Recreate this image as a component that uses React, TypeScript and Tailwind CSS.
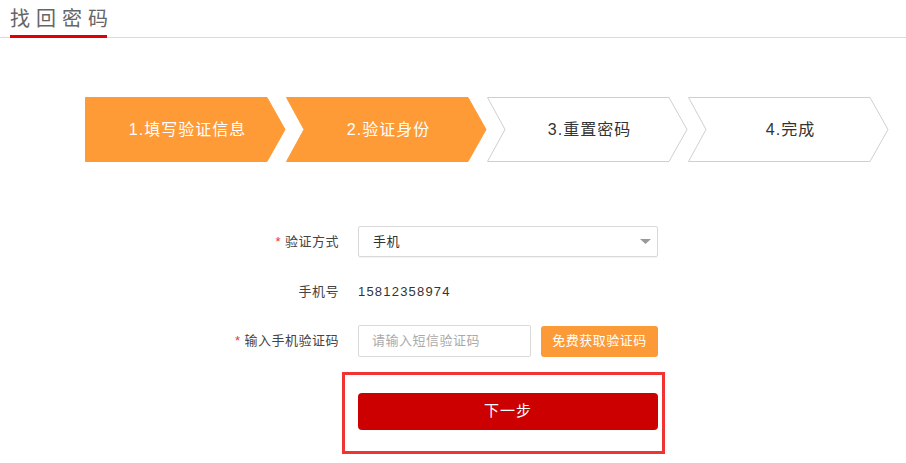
import React from "react";

const FONT = '"Helvetica Neue", "Liberation Sans", "Noto Sans CJK SC", sans-serif';

function Step({ label, active, first }: { label: string; active: boolean; first?: boolean }) {
  const pts = first
    ? "0.5,0.5 182,0.5 200,32.5 182,64.5 0.5,64.5"
    : "0.5,0.5 182,0.5 200,32.5 182,64.5 0.5,64.5 18,32.5";
  return (
    <div className="relative w-[201px] h-[65px] flex items-center justify-center">
      <svg className="absolute inset-0" width="201" height="65" viewBox="0 0 201 65">
        <polygon
          points={pts}
          fill={active ? "#fe9b37" : "#ffffff"}
          stroke={active ? "#fe9b37" : "#cfcfcf"}
          strokeWidth="1"
        />
      </svg>
      <span
        className={`relative text-[16px] tracking-[1px] pl-[4px] ${active ? "text-white" : "text-[#333]"}`}
      >
        {label}
      </span>
    </div>
  );
}

export default function App() {
  return (
    <div className="w-[906px] h-[463px] bg-white overflow-hidden" style={{ fontFamily: FONT }}>
      {/* header */}
      <div className="h-[38px] border-b border-[#dcdcdc] flex items-end pl-[10px]">
        <div className="w-[97px] mb-[-1px] border-b-[3px] border-[#e00000] pb-[3px] text-[20px] leading-[26px] tracking-[6px] text-[#666] whitespace-nowrap">
          找回密码
        </div>
      </div>

      {/* steps */}
      <div className="flex pl-[85px] mt-[59px]">
        <Step label="1.填写验证信息" active first />
        <Step label="2.验证身份" active />
        <Step label="3.重置密码" active={false} />
        <Step label="4.完成" active={false} />
      </div>

      {/* form */}
      <div className="mt-[64px] text-[13px]">
        <div className="flex items-center h-[31px]">
          <div className="w-[340px] pr-[1px] text-right text-[#444] tracking-[0.5px]">
            <span className="text-[#e33] mr-[4px]">*</span>验证方式
          </div>
          <div className="ml-[18px] w-[300px] h-[31px] border border-[#d9d9d9] rounded-[2px] shadow-[0_1px_1px_rgba(0,0,0,0.05)] flex items-center justify-between pl-[14px] pr-[6px] text-[#333]">
            <span className="tracking-[0.5px]">手机</span>
            <svg width="11" height="5" viewBox="0 0 11 5">
              <polygon points="0,0 11,0 5.5,5" fill="#9a9a9a" />
            </svg>
          </div>
        </div>

        <div className="flex items-center h-[36px] mt-[17px]">
          <div className="w-[340px] pr-[1px] text-right text-[#444] tracking-[0.5px]">手机号</div>
          <div className="ml-[18px] text-[#333] tracking-[1.2px]">15812358974</div>
        </div>

        <div className="flex items-center h-[32px] mt-[15px]">
          <div className="w-[340px] pr-[1px] text-right text-[#444] tracking-[0.5px]">
            <span className="text-[#e33] mr-[4px]">*</span>输入手机验证码
          </div>
          <div className="ml-[18px] w-[173px] h-[32px] border border-[#d9d9d9] rounded-[2px] flex items-center pl-[13px] text-[#aaa] tracking-[0.5px]">
            请输入短信验证码
          </div>
          <div className="ml-[10px] w-[117px] h-[31px] rounded-[3px] bg-[#fd9a38] text-white flex items-center justify-center tracking-[0.5px]">
            免费获取验证码
          </div>
        </div>

        <div className="ml-[342px] mt-[15px] w-[323px] h-[82px] border-[3px] border-[#f03434] pl-[13px] pt-[18px]">
          <div className="w-[300px] h-[37px] rounded-[4px] bg-[#cc0000] text-white text-[15px] flex items-center justify-center tracking-[1px]">
            下一步
          </div>
        </div>
      </div>
    </div>
  );
}
